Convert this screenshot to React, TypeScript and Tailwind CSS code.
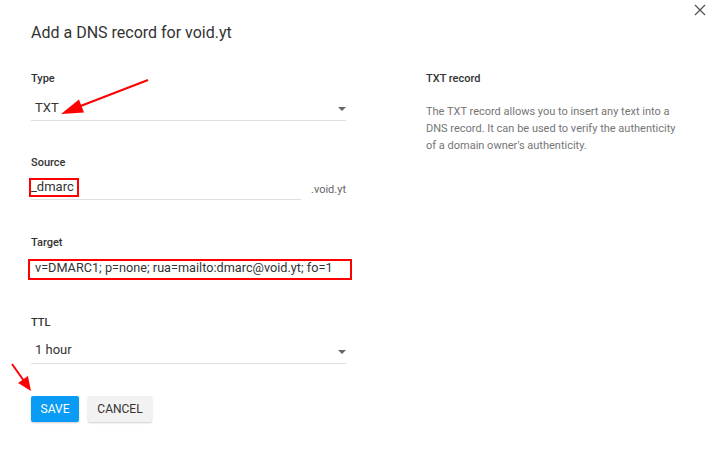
import React from "react";

const Caret: React.FC = () => (
  <span className="absolute right-0 top-1/2 -translate-y-1/2 w-0 h-0 border-l-[4px] border-r-[4px] border-t-[4px] border-l-transparent border-r-transparent border-t-[#666]" />
);

const Label: React.FC<{ children: React.ReactNode }> = ({ children }) => (
  <div className="text-[11px] leading-[16px] font-medium text-[#333]">{children}</div>
);

export default function App() {
  return (
    <div className="relative w-[716px] h-[453px] bg-white overflow-hidden font-['Roboto',_sans-serif] text-[#333]">
      {/* close button */}
      <button className="absolute top-[3px] right-[10px] w-[13px] h-[13px] flex items-center justify-center">
        <svg width="12" height="12" viewBox="0 0 12 12" fill="none">
          <path d="M1 1L11 11M11 1L1 11" stroke="#555" strokeWidth="1.3" />
        </svg>
      </button>

      <div className="flex pl-[31px] pt-[21px]">
        {/* form */}
        <div className="w-[315px]">
          <h1 className="text-[16px] leading-[24px] text-[#333]">Add a DNS record for void.yt</h1>

          {/* Type */}
          <div className="mt-[26px]">
            <Label>Type</Label>
            <div className="relative mt-[11px] pb-[2px] border-b border-[#e0e0e0]">
              <div className="pl-[4px] text-[13px] leading-[20px]">TXT</div>
              <Caret />
            </div>
          </div>

          {/* Source */}
          <div className="mt-[34px]">
            <Label>Source</Label>
            <div className="mt-[6px] flex items-end">
              <div className="relative w-[270px] pb-[2px] border-b border-[#e0e0e0]">
                <div className="text-[13px] leading-[20px]">_dmarc</div>
                <span className="absolute left-[-2px] top-[1px] w-[50px] h-[19px] border-2 border-[#ff0000]" />
              </div>
              <div className="ml-auto text-[11px] leading-[16px] text-[#666] pb-[2px]">.void.yt</div>
            </div>
          </div>

          {/* Target */}
          <div className="mt-[35px]">
            <Label>Target</Label>
            <div className="relative mt-[7px] pb-[1px] border-b border-[#e0e0e0]">
              <div className="pl-[4px] text-[12.7px] leading-[20px] whitespace-nowrap">
                v=DMARC1; p=none; rua=mailto:dmarc@void.yt; fo=1
              </div>
              <span className="absolute left-[-3px] top-[1px] w-[324px] h-[21px] border-2 border-[#ff0000]" />
            </div>
          </div>

          {/* TTL */}
          <div className="mt-[35px]">
            <Label>TTL</Label>
            <div className="relative mt-[9px] pb-[3px] border-b border-[#e0e0e0]">
              <div className="pl-[4px] text-[13px] leading-[20px]">1 hour</div>
              <Caret />
            </div>
          </div>

          {/* actions */}
          <div className="mt-[32px] flex gap-[9px]">
            <button className="w-[48px] h-[26px] rounded-[2px] bg-[#0a9cf5] text-white text-[12px] shadow-[0_1px_2px_rgba(0,0,0,0.2)]">
              SAVE
            </button>
            <button className="w-[64px] h-[26px] rounded-[2px] bg-[#f2f2f2] text-[#333] text-[12px] shadow-[0_1px_2px_rgba(0,0,0,0.2)]">
              CANCEL
            </button>
          </div>
        </div>

        {/* help panel */}
        <div className="ml-[80px] w-[262px] mt-[50px]">
          <Label>TXT record</Label>
          <p className="mt-[16px] text-[11px] leading-[17px] text-[#757575]">
            The TXT record allows you to insert any text into a DNS record. It can be used to verify the
            authenticity of a domain owner's authenticity.
          </p>
        </div>
      </div>

      {/* annotation arrows */}
      <svg className="absolute inset-0 pointer-events-none" width="716" height="453">
        <line x1="148" y1="80" x2="78" y2="107" stroke="#ff0000" strokeWidth="2" />
        <polygon points="61,114 84,112.5 79,99.5" fill="#ff0000" />
        <line x1="12" y1="364" x2="24" y2="381" stroke="#ff0000" strokeWidth="2" />
        <polygon points="31,391 27.9,376.1 18.1,382.9" fill="#ff0000" />
      </svg>
    </div>
  );
}
